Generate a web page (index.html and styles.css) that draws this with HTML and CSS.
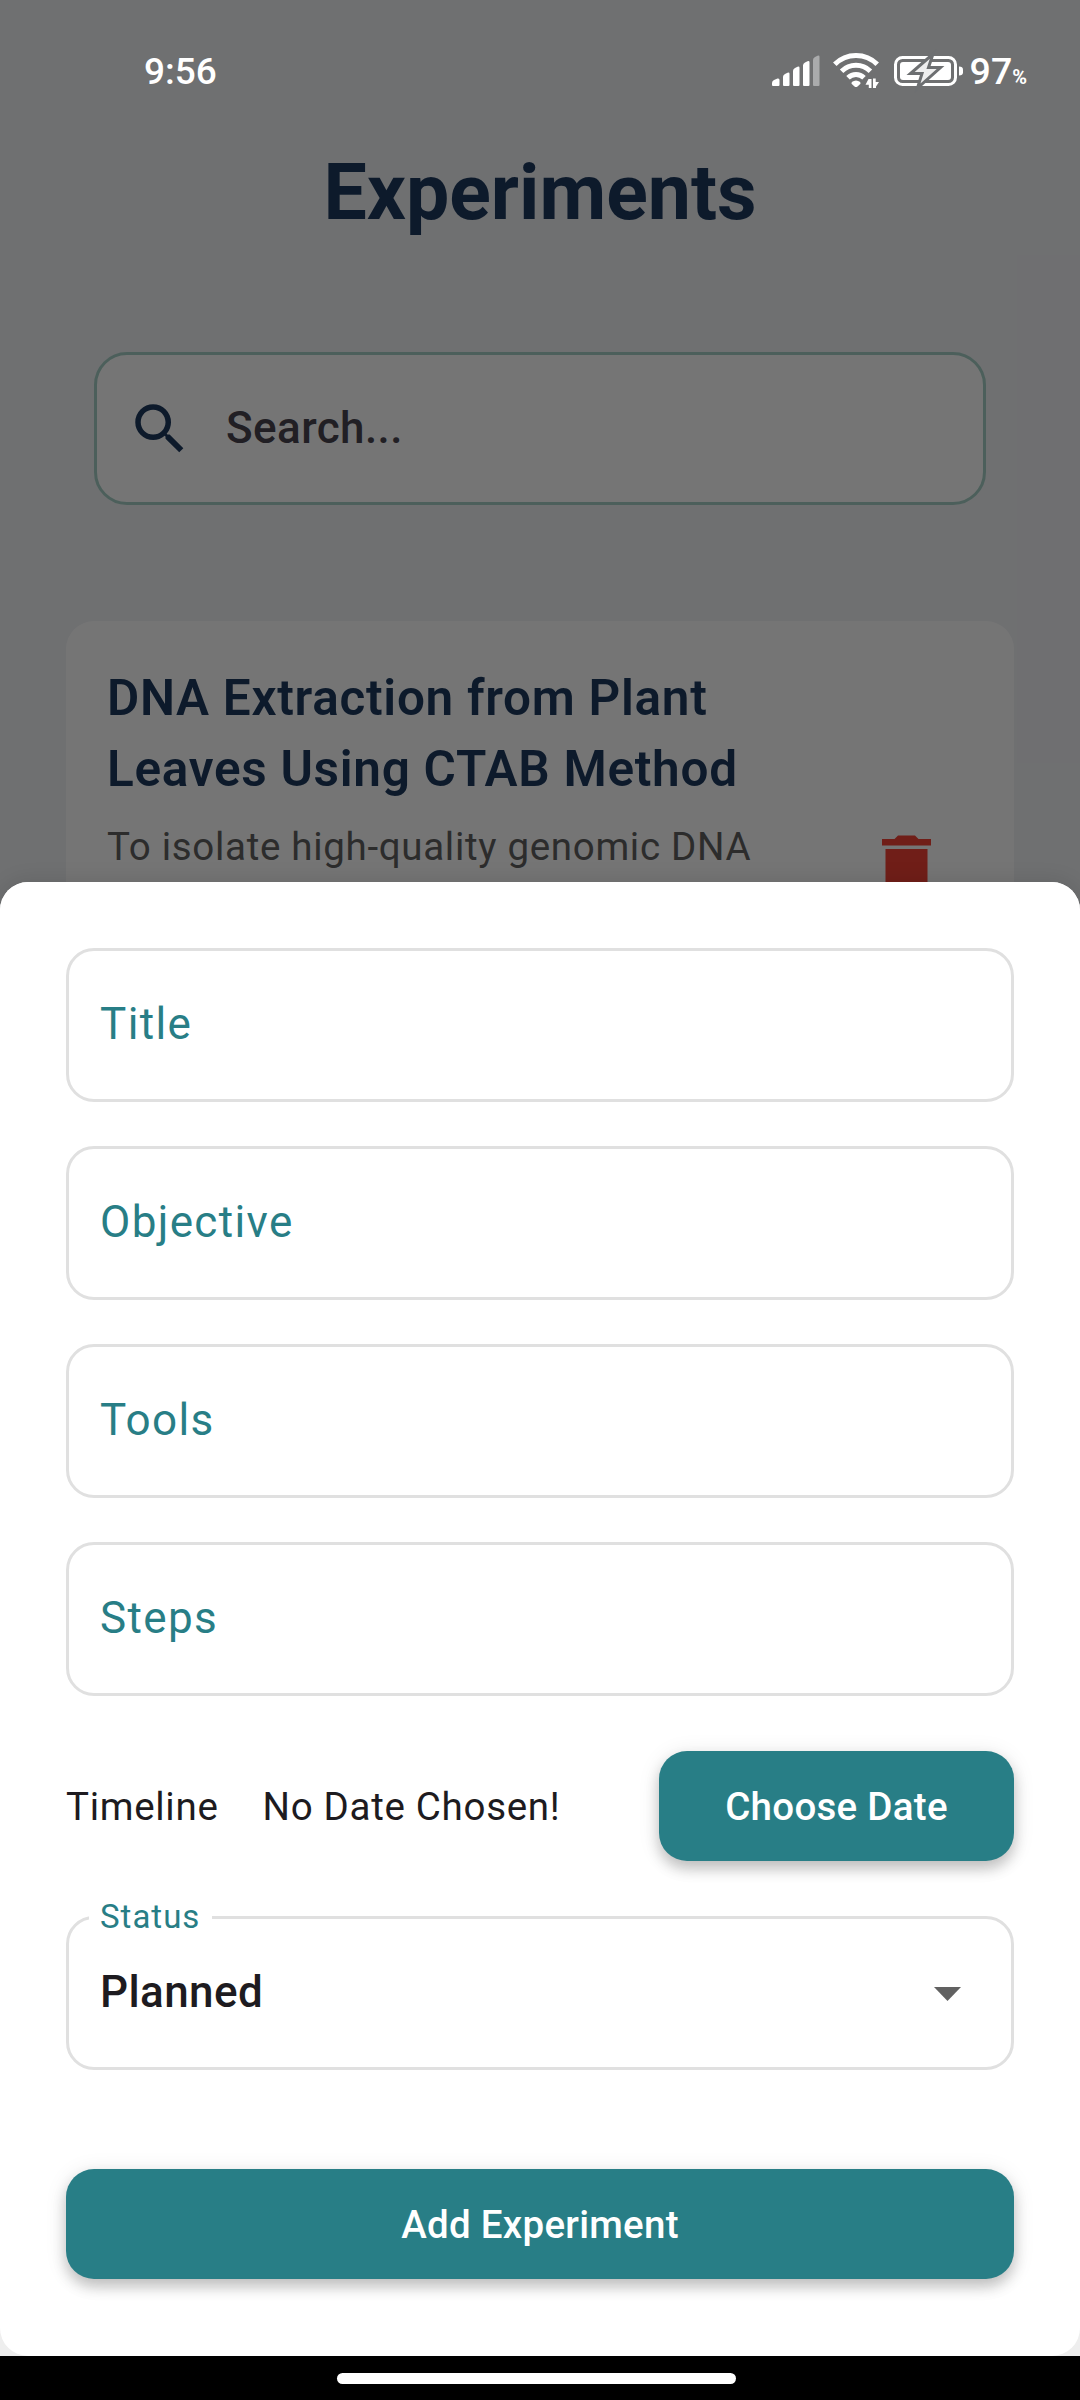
FILE: index.html
```html
<!DOCTYPE html>
<html lang="en">
<head>
<meta charset="utf-8">
<title>Experiments</title>
<link rel="stylesheet" href="styles.css">
</head>
<body>
<div class="screen">
  <main class="page">
    <h1 class="page-title">Experiments</h1>
    <div class="search">
      <svg class="search-icon" viewBox="0 0 24 24"><path d="M15.5 14h-.79l-.28-.27A6.471 6.471 0 0 0 16 9.5 6.5 6.5 0 1 0 9.5 16c1.61 0 3.09-.59 4.23-1.57l.27.28v.79l5 4.99L20.49 19l-4.99-5zm-6 0C7.01 14 5 11.99 5 9.500S7.010 5 9.500 5 14 7.010 14 9.500 11.990 14 9.500 14z"/></svg>
      <span class="search-text">Search...</span>
    </div>
    <article class="card">
      <div class="card-body">
        <h2 class="card-title">DNA Extraction from Plant<br>Leaves Using CTAB Method</h2>
        <p class="card-text">To isolate high-quality genomic DNA</p>
      </div>
      <svg class="trash" viewBox="0 0 49 64"><path d="M0 4h12.500L16 .5h17L36.500 4H49v6.500H0zM3.500 14H45.500v44a5 5 0 0 1-5 5h-32a5 5 0 0 1-5-5z"/></svg>
    </article>
  </main>
  <div class="scrim"></div>
  <header class="status-bar">
    <span class="clock">9:56</span>
    <div class="status-icons">
      <svg class="signal" viewBox="0 0 48 32">
        <path d="M0 28q0-2 2-3l3.500-1.500Q7.500 23 7.500 25v5q0 1-1 1h-5.500q-1 0-1-1zM11 22q0-2 2-3l2.500-1.300q2-.7 2 1V30q0 1-1 1h-4.500q-1 0-1-1zM21 16q0-2 2-3l2.500-1.300q2-.7 2 1V30q0 1-1 1h-4.500q-1 0-1-1zM31 10.500q0-2 2-3l2.500-1.300q2-.7 2 1V30q0 1-1 1h-4.500q-1 0-1-1z"/>
        <path class="dim" d="M41 5q0-2 2-3l2.500-1.300q2-.7 2 1V30q0 1-1 1h-4.500q-1 0-1-1z"/>
      </svg>
      <svg class="wifi" viewBox="0 0 46 36">
        <g class="arcs"><path d="M1.800 11.300a30 30 0 0 1 42.400 0"/><path d="M8.600 18.200a20.500 20.500 0 0 1 28.800 0"/><path d="M15 24.800a11.500 11.500 0 0 1 16 0"/></g>
        <path d="M18.800 29q4.200-3.200 8.400 0l.3 1.700L24.500 33.500q-1.500 1.200-3 0L18.500 30.700z"/>
        <path d="M35.500 26h3v9h-2.700v-3.200h-3.300zM40 25.500h2.700V29h3.300l-3 4.500v1.500h-3z"/>
      </svg>
      <svg class="battery" viewBox="0 0 69 30">
        <rect class="shell" x="1.500" y="1.500" width="60" height="27" rx="7"/>
        <rect x="6" y="6" width="51" height="18" rx="3"/>
        <path d="M65 10.500q4 0 4 3v3q0 3-4 3z"/>
        <path class="bolt" d="M39-2L16.500 17.500H28L23.500 32 46.500 11.500H34.500z"/>
      </svg>
      <span class="level">97<small class="percent">%</small></span>
    </div>
  </header>
  <div class="sheet-backing">
    <form class="sheet">
      <div class="field"><span class="label">Title</span></div>
      <div class="field"><span class="label">Objective</span></div>
      <div class="field"><span class="label">Tools</span></div>
      <div class="field"><span class="label">Steps</span></div>
      <div class="timeline">
        <span class="timeline-name">Timeline</span>
        <span class="timeline-value">No Date Chosen!</span>
        <div class="button choose">Choose Date</div>
      </div>
      <div class="field select">
        <span class="float-label">Status</span>
        <span class="value">Planned</span>
        <svg class="caret" viewBox="0 0 27 14"><path d="M0 0h27L13.500 14z"/></svg>
      </div>
      <div class="button add">Add Experiment</div>
    </form>
  </div>
  <footer class="nav"><div class="pill"></div></footer>
</div>
</body>
</html>
```

FILE: styles.css
```css
* { box-sizing: border-box; margin: 0; }
body { font-family: Roboto, sans-serif; background: #000; }
.screen { position: relative; width: 1080px; height: 2400px; overflow: hidden; white-space: nowrap; }

.page { height: 100%; padding-top: 148px; background: #f1f3f6; overflow: hidden; }
.page-title { height: 90px; line-height: 90px; font-size: 77px; font-weight: 700; text-align: center; color: #1e3a5f; }
.search { display: flex; align-items: center; height: 153px; margin: 114px 94px 0; padding-left: 30px; border: 3px solid #a6d0c6; border-radius: 33px; background: #fff; }
.search-icon { width: 66px; height: 66px; fill: #1e3a5f; }
.search-text { margin-left: 33px; padding-bottom: 1px; font-size: 44px; font-weight: 500; letter-spacing: .4px; color: #49454f; }
.card { display: flex; height: 400px; margin: 116px 66px 0; padding: 42px 83px 0 41px; border-radius: 28px; background: #fff; }
.card-body { flex: 1; }
.card-title { font-size: 49.500px; line-height: 71px; font-weight: 600; color: #1e3a5f; letter-spacing: .7px; }
.card-text { margin-top: 14px; font-size: 38.500px; line-height: 55px; letter-spacing: .69px; color: #616161; }
.trash { width: 49px; height: 64px; margin-top: 172px; fill: #f44336; }

.scrim { position: absolute; inset: 0 0 44px; background: rgba(0, 0, 0, .54); }

.status-bar { position: absolute; inset: 0 0 auto; height: 142px; padding: 0 53px 0 144px; display: flex; align-items: center; justify-content: space-between; color: #fff; }
.clock { font-size: 37px; font-weight: 500; }
.status-icons { display: flex; align-items: center; fill: #fff; }
.signal { width: 48px; height: 32px; }
.dim { fill: #aaabac; }
.wifi { width: 46px; height: 36px; margin-left: 13px; }
.arcs { fill: none; stroke: #fff; stroke-width: 5; }
.battery { width: 69px; height: 30px; margin-left: 15px; overflow: visible; }
.shell { fill: none; stroke: #fff; stroke-width: 3; }
.bolt { fill: #eee; stroke: #6d6f71; stroke-width: 3; }
.level { margin-left: 7px; font-size: 37.500px; font-weight: 500; }
.percent { font-size: 20px; font-weight: 700; }

.sheet-backing { position: absolute; inset: 882px 0 44px; border-radius: 28px 28px 0 0; background: #eee; box-shadow: 0 0 22px rgba(0, 0, 0, .12); }
.sheet { height: 100%; padding: 66px 66px 0; border-radius: 28px; background: #fff; }
.field { display: flex; align-items: center; height: 154px; margin-bottom: 44px; padding: 0 31px; border: 3px solid #e0e0e0; border-radius: 28px; }
.label { padding-bottom: 3px; font-size: 44px; letter-spacing: 1.375px; color: #287e86; }
.timeline { display: flex; align-items: center; height: 110px; margin-top: 55px; font-size: 38.500px; letter-spacing: .7px; color: #1d1b20; }
.timeline-value { margin-left: 44px; }
.button { display: flex; align-items: center; justify-content: center; height: 110px; border-radius: 28px; background: #287e86; color: #fff; font-size: 38.500px; font-weight: 500; letter-spacing: .275px; box-shadow: 0 8px 14px rgba(0, 0, 0, .2), 0 3px 22px rgba(0, 0, 0, .1); }
.choose { width: 355px; margin-left: auto; }
.select { position: relative; margin: 55px 0 99px; justify-content: space-between; }
.float-label { position: absolute; left: 20px; top: -21px; height: 38px; line-height: 38px; padding: 0 12px 0 11px; background: #fff; font-size: 33px; letter-spacing: 1px; color: #287e86; }
.value { padding-bottom: 3px; font-size: 44px; font-weight: 500; letter-spacing: .4px; color: #1d1b20; }
.caret { width: 27px; height: 14px; margin: 2px 19px 0 0; fill: #616161; }

.nav { position: absolute; inset: auto 0 0; height: 44px; padding-top: 17px; background: #000; }
.pill { width: 399px; height: 11px; margin: 0 auto 0 337px; border-radius: 6px; background: #fff; }
```
